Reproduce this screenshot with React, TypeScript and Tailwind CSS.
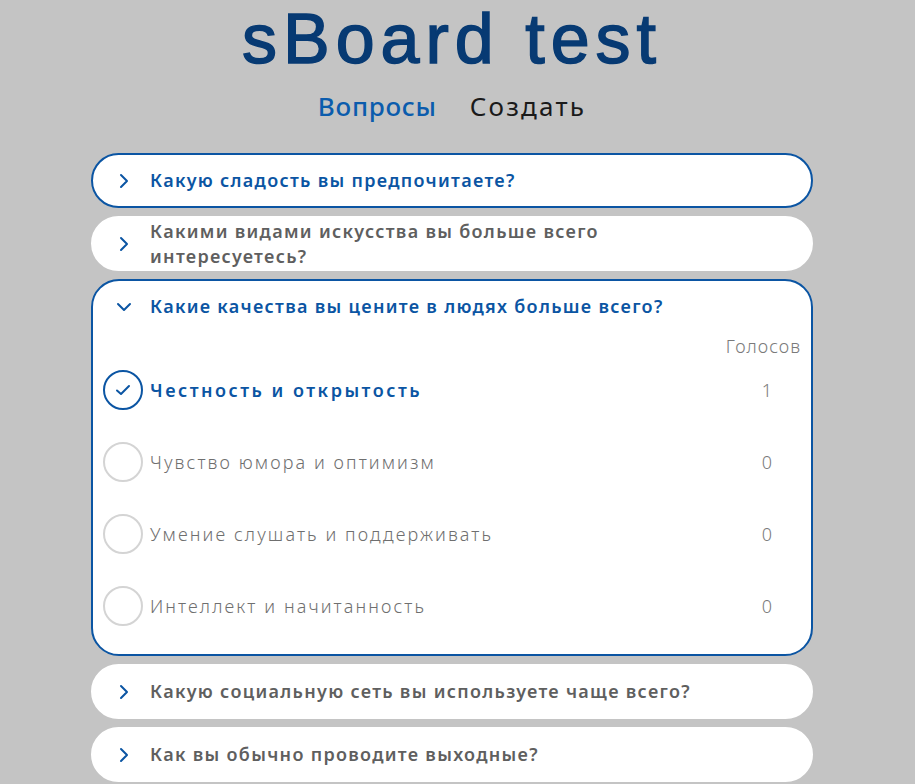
import { useState } from 'react';

interface Option {
  text: string;
  votes: number;
  picked?: boolean;
}

interface Question {
  id: number;
  title: string;
  options: Option[];
}

const questions: Question[] = [
  { id: 1, title: 'Какую сладость вы предпочитаете?', options: [] },
  { id: 2, title: 'Какими видами искусства вы больше всего интересуетесь?', options: [] },
  {
    id: 3,
    title: 'Какие качества вы цените в людях больше всего?',
    options: [
      { text: 'Честность и открытость', votes: 1, picked: true },
      { text: 'Чувство юмора и оптимизм', votes: 0 },
      { text: 'Умение слушать и поддерживать', votes: 0 },
      { text: 'Интеллект и начитанность', votes: 0 },
    ],
  },
  { id: 4, title: 'Какую социальную сеть вы используете чаще всего?', options: [] },
  { id: 5, title: 'Как вы обычно проводите выходные?', options: [] },
];

function Chevron({ open }: { open: boolean }) {
  return (
    <svg width="16" height="16" viewBox="0 0 16 16" className={open ? 'rotate-90' : ''}>
      <path d="M5 2 L11 8 L5 14" fill="none" stroke="#0b55a3" strokeWidth="2" strokeLinecap="round" strokeLinejoin="round" />
    </svg>
  );
}

function Check() {
  return (
    <svg width="16" height="16" viewBox="0 0 16 16">
      <path d="M2 8.5 L6 12 L14 4" fill="none" stroke="#0b55a3" strokeWidth="2" strokeLinecap="round" strokeLinejoin="round" />
    </svg>
  );
}

function QuestionCard({ q, open, active, onToggle }: { q: Question; open: boolean; active: boolean; onToggle: () => void }) {
  return (
    <div className={`bg-white border-2 rounded-[28px] ${active || open ? 'border-[#0b55a3]' : 'border-white'}`}>
      <button onClick={onToggle} className="w-full min-h-[51px] flex items-center text-left cursor-pointer">
        <div className="w-[57px] flex justify-center pl-1">
          <Chevron open={open} />
        </div>
        <div
          className={`max-w-[580px] text-[18px] leading-[25px] font-semibold tracking-[1.3px] ${active || open ? 'text-[#0b55a3]' : 'text-[#5f5f5f]'}`}
        >
          {q.title}
        </div>
      </button>

      {open && (
        <div className="px-[10px] pt-[2px] pb-[28px]">
          <div className="flex justify-end">
            <div className="text-right text-[18px] leading-6 font-light tracking-[1px] text-[#7a7a7a]">Голосов</div>
          </div>
          <div className="mt-3 flex flex-col gap-8">
            {q.options.map((o) => (
              <div key={o.text} className="h-10 flex items-center">
                <div
                  className={`w-10 h-10 rounded-full border-2 flex items-center justify-center ${o.picked ? 'border-[#0b55a3]' : 'border-[#d4d4d4]'}`}
                >
                  {o.picked && <Check />}
                </div>
                <div
                  className={`ml-[7px] flex-1 text-[18px] ${o.picked ? 'font-semibold tracking-[2.5px] text-[#0b55a3]' : 'font-light tracking-[2.1px] text-[#6f6f6f]'}`}
                >
                  {o.text}
                </div>
                <div className="w-[80px] pl-3 text-center text-[18px] font-light text-[#7a7a7a]">{o.votes}</div>
              </div>
            ))}
          </div>
        </div>
      )}
    </div>
  );
}

export default function App() {
  const [openId, setOpenId] = useState<number | null>(3);

  return (
    <div className="min-h-screen bg-[#c4c4c4] font-['Noto_Sans',sans-serif]">
      <div className="w-[904px]">
        <div className="flex flex-col items-center">
          <h1 className="font-['Liberation_Sans',sans-serif] text-[70px] leading-[78px] text-[#073a73] tracking-[6px] [-webkit-text-stroke:1.5px_#073a73]">
            sBoard test
          </h1>
          <nav className="mt-[12px] flex gap-[33px] text-[26px] leading-8">
            <a className="text-[#0b5cad] font-medium tracking-[0.7px]">Вопросы</a>
            <a className="text-[#1a1a1a] tracking-[2.2px]">Создать</a>
          </nav>
        </div>

        <div className="mx-auto mt-[31px] w-[722px] flex flex-col gap-2 pb-6">
          {questions.map((q) => (
            <QuestionCard
              key={q.id}
              q={q}
              open={openId === q.id}
              active={q.id === 1}
              onToggle={() => setOpenId(openId === q.id ? null : q.id)}
            />
          ))}
        </div>
      </div>
    </div>
  );
}
